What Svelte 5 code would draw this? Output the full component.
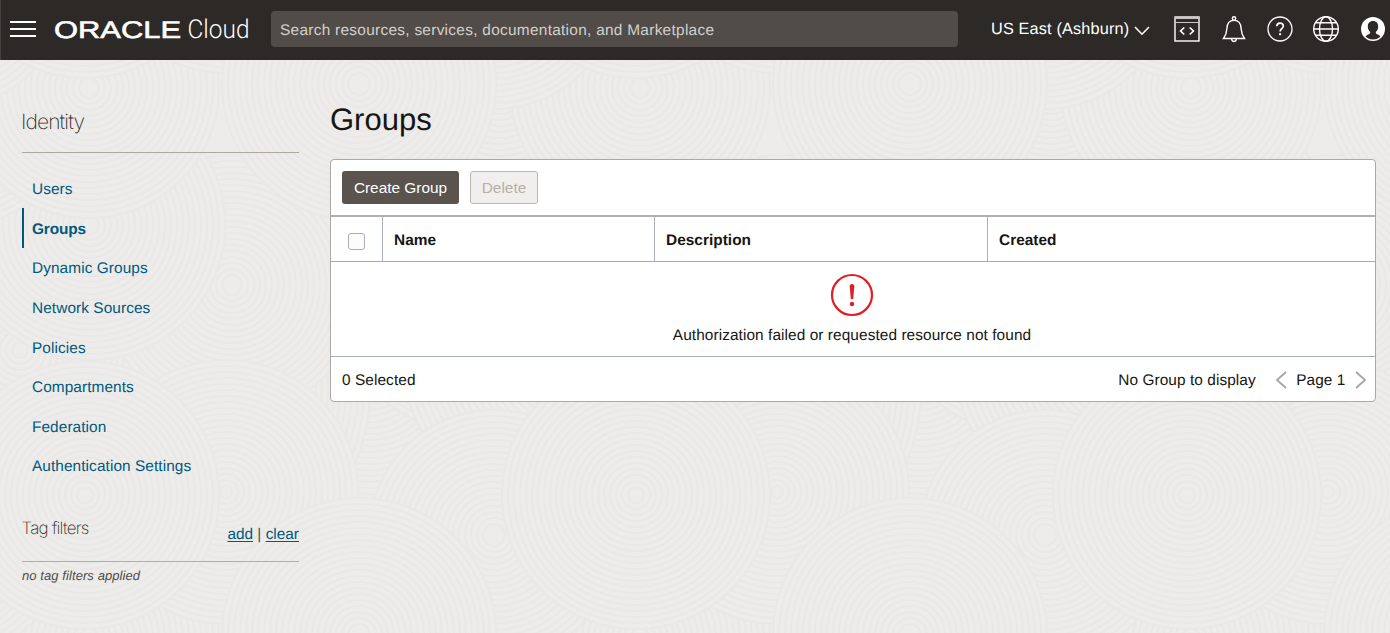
<script>
  const links = ['Users', 'Groups', 'Dynamic Groups', 'Network Sources', 'Policies', 'Compartments', 'Federation', 'Authentication Settings'];

  // Overlapping ringed discs; later discs cover earlier ones. The tile repeats every 551px.
  const discs = [
    [370, 370, 190], [180, 390, 190], [500, 250, 190], [20, 350, 170],
    [232, 285, 130], [90, 225, 135], [500, 88, 140], [89, 88, 130],
    [494, 535, 125], [226, 492, 132], [85, 495, 134], [359, 635, 137]
  ];
  const rings = (r) => Array.from({ length: Math.floor(r / 6) }, (_, i) => r - i * 6);
</script>

<svg class="texture" width="1390" height="633" aria-hidden="true">
  {#each discs as [x, y, r]}
    {#each [-551, 0, 551, 1102] as dx}
      {#each [-551, 0, 551] as dy}
        {#each rings(r) as q, i}
          <circle cx={x + dx} cy={y + dy} r={q} fill={i === 0 ? '#edecea' : 'none'} stroke="#e9e8e6" stroke-width="2.2" />
        {/each}
      {/each}
    {/each}
  {/each}
</svg>

<header>
  <svg class="menu" width="26" height="16" viewBox="0 0 26 16"><path d="M0 1h26M0 8h26M0 15h26" stroke="#fff" stroke-width="2" /></svg>
  <svg class="logo" width="202" height="40" viewBox="0 0 202 40">
    <text class="oracle" x="0" y="28" textLength="127" lengthAdjust="spacingAndGlyphs">ORACLE</text>
    <text class="cloud" x="133.500" y="28" textLength="62" lengthAdjust="spacingAndGlyphs">Cloud</text>
  </svg>
  <div class="search">Search resources, services, documentation, and Marketplace</div>
  <div class="region">US East (Ashburn)
    <svg width="16" height="10" viewBox="0 0 16 10"><path d="M1 1l7 7.2L15 1" fill="none" stroke="#fff" stroke-width="1.6" /></svg>
  </div>
  <div class="icons">
    <svg width="26" height="26" viewBox="0 0 26 26" fill="none" stroke="#fff" stroke-width="1.4"><rect x="1" y="1" width="24" height="24" /><path d="M1 2h24" stroke="#c9c7c5" stroke-width="2" /><path d="M1 6.500h24" stroke="#c9c7c5" stroke-width="1" /><path d="M10.300 11.500L6.600 15l3.700 3.500M15.700 11.500l3.700 3.500-3.700 3.500" stroke-width="1.700" /></svg>
    <svg width="26" height="28" viewBox="0 0 26 28" fill="none" stroke="#fff" stroke-width="1.4"><circle cx="13" cy="3.500" r="1.700" /><path d="M2.500 23.500h21c-2.500-3.500-3.200-5.500-3.400-10C19.900 8.200 17.500 5.400 13 5.400S6.100 8.200 5.900 13.500c-.2 4.500-.9 6.500-3.400 10zM10.600 24c.2 3.300 4.600 3.300 4.800 0" /></svg>
    <svg width="26" height="26" viewBox="0 0 26 26" fill="none" stroke="#fff" stroke-width="1.3"><circle cx="13" cy="13" r="12" /><path d="M9.800 10.300c0-4.300 6.500-4.300 6.500-.3 0 2.500-3.200 2.600-3.200 5.500" stroke-width="1.700" /><path d="M13.100 17.200v2" stroke-width="2" /></svg>
    <svg class="globe" width="28" height="28" viewBox="0 0 28 28" fill="none" stroke="#fff" stroke-width="1.4"><circle cx="14" cy="14" r="12.300" /><ellipse cx="14" cy="14" rx="6.500" ry="12.300" /><path d="M1.700 14h24.600M4 7.700h20M4 20.300h20" /></svg>
    <svg width="26" height="26" viewBox="0 0 26 26"><circle cx="13" cy="13" r="12" fill="#fff" /><path d="M13 5c3.400 0 5.200 2.400 5.200 5.600 0 2.500-1 4.500-2.400 5.500-.1 1.200.2 1.700 1.400 2.100 1.700.6 2.600 1.300 3.200 2.500A11.200 11.200 0 0 1 5.600 20.700c.6-1.200 1.500-1.900 3.200-2.500 1.200-.4 1.500-.9 1.400-2.100-1.400-1-2.400-3-2.400-5.500C7.800 7.400 9.600 5 13 5z" fill="#2d2926" /></svg>
  </div>
</header>

<div class="page">
  <aside>
    <h2>Identity</h2>
    <nav>
      {#each links as link}
        <a href="#top" class:active={link === 'Groups'}>{link}</a>
      {/each}
    </nav>
    <div class="tags"><h3>Tag filters</h3><p><a href="#top">add</a> | <a href="#top">clear</a></p></div>
    <p class="none">no tag filters applied</p>
  </aside>
  <main>
    <h1>Groups</h1>
    <section>
      <div class="toolbar"><button class="primary">Create Group</button><button class="off" disabled>Delete</button></div>
      <div class="head">
        <div class="check"><i></i></div><div>Name</div><div>Description</div><div>Created</div>
      </div>
      <div class="error">
        <svg width="44" height="44" viewBox="0 0 44 44"><circle cx="22" cy="22" r="20" fill="none" stroke="#e01f24" stroke-width="2.200" /><path d="M19.700 13.300c0-3 4.600-3 4.600 0L23.200 26h-2.400z" fill="#e01f24" /><circle cx="22" cy="31" r="2.200" fill="#e01f24" /></svg>
        <p>Authorization failed or requested resource not found</p>
      </div>
      <footer>
        <span>0 Selected</span><span class="count">No Group to display</span>
        <svg width="12" height="18" viewBox="0 0 12 18"><path d="M11 1L2 9l9 8" fill="none" stroke="#a5a5a5" stroke-width="1.800" /></svg>
        <span class="pg">Page 1</span>
        <svg width="12" height="18" viewBox="0 0 12 18"><path d="M1 1l9 8-9 8" fill="none" stroke="#a5a5a5" stroke-width="1.800" /></svg>
      </footer>
    </section>
  </main>
</div>

<style>
  :global(body) { background: #edecea; overflow: hidden; }
  :global(#app) { font: 15.4px/20px "Liberation Sans", Arial, sans-serif; letter-spacing: .08px; color: #161513; text-rendering: geometricPrecision; }
  * { box-sizing: border-box; }
  h1, h2, h3, p { margin: 0; }
  .texture { position: absolute; inset: 0; z-index: -1; }
  header { height: 60px; background: #2d2926; border-left: 1px solid #45413e; color: #fff; display: flex; align-items: center; padding-left: 9px; }
  .menu { flex: none; margin-bottom: 2px; }
  .logo { flex: none; margin-left: 18px; }
  .oracle { font: 400 24px "Liberation Sans", sans-serif; fill: #fff; stroke: #fff; stroke-width: .6px; letter-spacing: 0; }
  .cloud { font: 300 26px Roboto, sans-serif; fill: #fff; letter-spacing: 0; }
  .search { flex: none; width: 687px; height: 36px; margin-left: 15px; margin-bottom: 2px; border-radius: 4px; background: #514c47; color: #d3d0cd; padding: 9px 9px 0; line-height: 21px; letter-spacing: .29px; }
  .region { width: 160px; margin-left: 33px; margin-bottom: 3px; font-size: 16.300px; letter-spacing: .15px; white-space: nowrap; display: flex; align-items: center; gap: 5px; }
  .region svg { margin-top: 5px; }
  .icons { margin-left: 23px; display: flex; align-items: center; gap: 20.500px; margin-bottom: 2px; }
  .icons svg { flex: none; }
  .icons .globe { margin-left: -1.500px; }
  .icons svg:last-child { margin-left: -.5px; }
  .page { display: flex; padding-left: 22px; }
  aside { width: 277px; }
  h2 { height: 93px; border-bottom: 1px solid #acaa9c; padding-top: 50px; font: 200 21px/26px Inter, sans-serif; letter-spacing: -.9px; color: #312d2a; text-indent: -1px; }
  nav { padding-top: 16.200px; height: 332px; }
  a { color: #00597f; text-decoration: none; }
  nav a { display: block; height: 39.600px; line-height: 42px; padding-left: 10px; }
  nav a.active { font-weight: 700; border-left: 2px solid #00597f; margin-top: -.8px; padding: .8px 0 0 8px; height: 40.400px; letter-spacing: -.15px; }
  .tags { display: flex; justify-content: space-between; height: 77px; border-bottom: 1px solid #a9aeb3; }
  .tags h3 { font: 200 17px/22px Inter, sans-serif; letter-spacing: -.75px; padding-top: 33px; color: #312d2a; text-indent: -.5px; }
  .tags p { padding-top: 40px; color: #514c47; letter-spacing: 0; }
  .tags a { text-decoration: underline; text-underline-offset: 2px; }
  .none { font-size: 13px; line-height: 18px; font-style: italic; letter-spacing: .08px; color: #514c47; padding-top: 5px; }
  main { margin-left: 31px; width: 1046px; }
  h1 { height: 99px; padding-top: 42px; font-size: 31px; line-height: 36px; font-weight: 400; letter-spacing: 0; }
  section { background: #fff; border: 1px solid #aaa9a7; border-radius: 4px; height: 243px; }
  .toolbar { height: 57px; padding: 11px; border-bottom: 2px solid #adafb3; display: flex; gap: 11px; }
  button { font: inherit; letter-spacing: 0; height: 33px; border-radius: 3px; padding: 0; }
  .primary { width: 117px; border: 0; background: #5a534e; color: #fff; }
  .off { width: 68px; border: 1px solid #bab5af; background: #f1efed; color: #b5b0aa; }
  .head { display: grid; grid-template-columns: 52px 272px 333px 1fr; grid-template-rows: 44px; height: 45px; border-bottom: 1px solid #a9aaad; font-weight: 700; letter-spacing: .03px; }
  .head > div { padding: 14px 11px 0; border-right: 1px solid #a9aebb; }
  .head > div:last-child { border: 0; }
  .head > .check { padding: 16px 17px 0; }
  .check i { display: block; width: 17px; height: 17px; border: 1px solid #a7afbc; border-radius: 3px; background: #fcfcfb; }
  .error { height: 95px; border-bottom: 1px solid #a7aeb8; text-align: center; padding: 11px 2px 0 0; }
  .error svg { display: block; margin: 0 auto; }
  .error p { padding-top: 9px; }
  footer { height: 45px; display: flex; align-items: center; padding: 1px 8.500px 0 11px; }
  footer span { padding-top: 2px; }
  .count { margin-left: auto; margin-right: 19.500px; }
  .pg { margin: 0 9px; }
</style>
